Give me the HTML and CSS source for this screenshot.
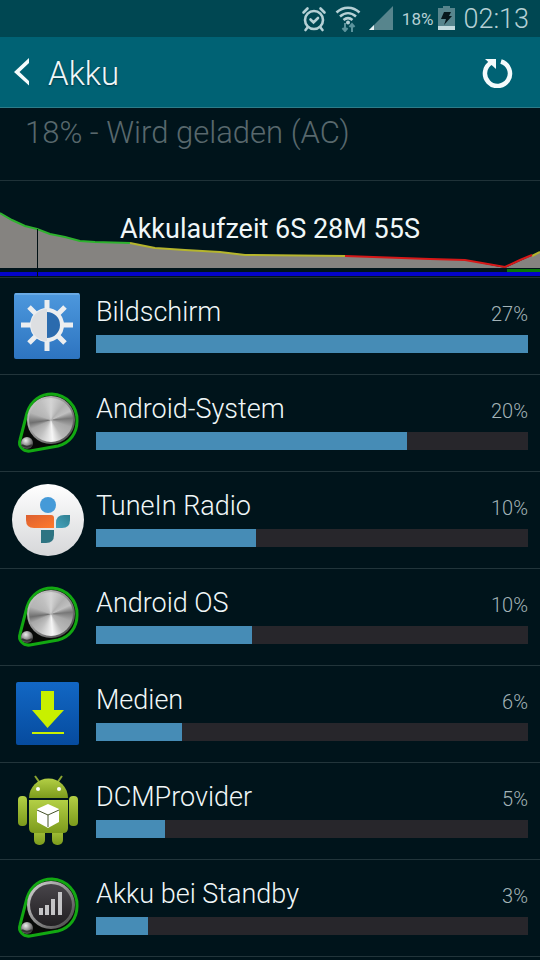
FILE: index.html
```html
<!DOCTYPE html>
<html lang="de">
<head>
  <meta charset="utf-8">
  <meta name="viewport" content="width=device-width,initial-scale=1.0">
  <title>Akku</title>
  <link rel="stylesheet" href="styles.css">
</head>
<body>

  <!-- shared gradients and the system knob -->
  <svg class="defs" aria-hidden="true">
    <defs>
      <linearGradient id="blue" x1="0" y1="0" x2="0" y2="1">
        <stop offset="0" stop-color="#4d98dd"/><stop offset="1" stop-color="#2d74c0"/>
      </linearGradient>
      <linearGradient id="deep-blue" x1="0" y1="0" x2="0" y2="1">
        <stop offset="0" stop-color="#1267c4"/><stop offset="1" stop-color="#064b9e"/>
      </linearGradient>
      <linearGradient id="white" x1="0" y1="0" x2="0" y2="1">
        <stop offset="0" stop-color="#ffffff"/><stop offset="1" stop-color="#d6d7d9"/>
      </linearGradient>
      <linearGradient id="orange" x1="0" y1="0" x2="1" y2="1">
        <stop offset="0" stop-color="#dc6030"/><stop offset="1" stop-color="#ff7a2c"/>
      </linearGradient>
      <linearGradient id="teal" x1="1" y1="0" x2="0" y2="1">
        <stop offset="0" stop-color="#2f7f90"/><stop offset="1" stop-color="#46a3bd"/>
      </linearGradient>
      <linearGradient id="droid" x1="0" y1="0" x2="0" y2="1">
        <stop offset="0" stop-color="#b3cf45"/><stop offset="1" stop-color="#7c9b1c"/>
      </linearGradient>
      <linearGradient id="rim" x1="0" y1="0" x2="1" y2="1">
        <stop offset="0" stop-color="#d8d8d8"/><stop offset=".5" stop-color="#8f8f8f"/><stop offset="1" stop-color="#3c3c3c"/>
      </linearGradient>
      <linearGradient id="face" x1="0" y1="0" x2="0" y2="1">
        <stop offset="0" stop-color="#48454a"/><stop offset="1" stop-color="#211f22"/>
      </linearGradient>
      <radialGradient id="ball" cx=".4" cy=".3" r=".7">
        <stop offset="0" stop-color="#eeeeee"/><stop offset=".5" stop-color="#999999"/><stop offset="1" stop-color="#444444"/>
      </radialGradient>
    </defs>
    <symbol id="knob-base" viewBox="0 0 72 72">
      <path d="M15 26C19 13 29 7 40 7a26 26 0 0 1 25 27c0 12-7 22-19 25L18 64C11 65 6 59 8 53Z" fill="#070907" stroke="#12a812" stroke-width="3"/>
      <circle cx="15" cy="56" r="6" fill="url(#ball)"/>
      <path d="M10 58c3 2 7 2 10 0" fill="none" stroke="#333" stroke-width="2"/>
      <circle cx="39" cy="33" r="24" fill="url(#rim)"/>
    </symbol>
  </svg>

  <div class="status-bar">
    <svg class="status-icon" width="26" height="26" viewBox="0 0 26 26" role="img" aria-label="Wecker">
      <g fill="none" stroke="#b5d0d5" stroke-width="2.6" stroke-linecap="round">
        <circle cx="13" cy="14" r="9"/>
        <path d="M9.500 13.500l3 3 4.500-4.500M2.500 6.500l4-4M23.500 6.500l-4-4M6.500 21.500L4.500 24M19.500 21.500l2 2.500"/>
      </g>
    </svg>
    <svg class="status-icon" width="26" height="26" viewBox="0 0 26 26" role="img" aria-label="WLAN">
      <g fill="none" stroke="#b5d0d5" stroke-width="2.500">
        <path d="M1.500 6.500C8 0 18 0 24.500 6.500M5 10.500c5-4.500 11-4.500 16 0M8.500 14c3-2.500 6-2.500 9 0"/>
      </g>
      <circle cx="13" cy="16.500" r="2" fill="#b5d0d5"/>
      <path d="M10 17v8M7.500 22l2.500 3 2.500-3M17 26v-8M14.500 21l2.500-3 2.500 3" fill="none" stroke="#5b939c" stroke-width="2"/>
    </svg>
    <svg class="status-icon" width="24" height="26" viewBox="0 0 24 26" role="img" aria-label="Signal">
      <path d="M24 0v24H0Z" fill="#57858d"/>
      <path d="M0 24h5v-5Z" fill="#e6f2f4"/>
    </svg>
    <span class="status-percent">18%</span>
    <svg class="status-icon" width="17" height="26" viewBox="0 0 17 26" role="img" aria-label="Akku wird geladen">
      <path d="M5 0h7v2h5v19H0V2h5Z" fill="#57858d"/>
      <path d="M0 20h17v4H0Z" fill="#c3dade"/>
      <path d="M6 6h7l-2 4h3L6 19l2-6H3Z" fill="#06171c"/>
    </svg>
    <time class="clock">02:13</time>
  </div>

  <header class="action-bar">
    <button class="back" type="button" aria-label="Zurück">
      <svg width="16" height="28" viewBox="0 0 16 28"><path d="M15 0v5L5.500 14 15 23v4.500L0 14Z" fill="#f4fbfc"/></svg>
    </button>
    <h1>Akku</h1>
    <button class="refresh" type="button" aria-label="Aktualisieren">
      <svg width="32" height="32" viewBox="0 0 32 32">
        <path d="M19 5.500a12.500 12.500 0 1 1-9.500 1" fill="none" stroke="#f4fbfc" stroke-width="4.500"/>
        <path d="M3 3h11v10Z" fill="#f4fbfc"/>
      </svg>
    </button>
  </header>

  <main>
    <p class="summary">18% - Wird geladen (AC)</p>

    <section class="history">
      <svg class="graph" viewBox="0 0 540 96" preserveAspectRatio="none" aria-hidden="true">
        <path d="M0 32L12 39 25 45 37 48 50 53 65 56 80 60 95 61 130 62 155 67 185 69 220 71 245 74 345 75 430 78 465 79 505 87 520 80 540 71V87H0Z" fill="#858380"/>
        <g fill="none" stroke-width="2">
          <path d="M0 32L12 39 25 45 37 48 50 53 65 56 80 60 95 61 130 62" stroke="#2eb22e"/>
          <path d="M130 62L155 67 185 69 220 71 245 74 345 75M532 75l8-4" stroke="#b5b52c"/>
          <path d="M345 75L430 78 465 79 505 86 520 79 532 74" stroke="#d61818"/>
        </g>
        <path d="M507 88h33v3h-33Z" fill="#087808"/>
        <path d="M0 91h540v4H0Z" fill="#0404c8"/>
        <path d="M37 48h1v48h-1Z" fill="#001014"/>
      </svg>
      <h2>Akkulaufzeit 6S 28M 55S</h2>
    </section>

    <ul class="usage">
      <li>
        <a href="#bildschirm">
          <svg class="icon" viewBox="0 0 72 72" aria-hidden="true">
            <rect x="2" y="3" width="66" height="66" rx="2" fill="url(#blue)"/>
            <path d="M3 4h64" stroke="#86bdec" stroke-width="1"/>
            <g stroke="#eceef0" stroke-width="5">
              <path d="M35 10v10M35 51v10M9 35h11M50 35h11M17 17l7 7M46 46l7 7M53 17l-7 7M24 46l-7 7"/>
            </g>
            <circle cx="35" cy="35" r="15" fill="#2b6bae" stroke="#eceef0" stroke-width="4"/>
            <path d="M35 19a16 16 0 0 0 0 32Z" fill="#dddfe2"/>
          </svg>
          <div class="info">
            <span class="name">Bildschirm</span><span class="percent">27%</span>
            <div class="bar"><div class="fill" style="width: 100%"></div></div>
          </div>
        </a>
      </li>
      <li>
        <a href="#android-system">
          <div class="icon knob">
            <svg viewBox="0 0 72 72" aria-hidden="true"><use href="#knob-base"/></svg>
            <div class="steel"></div>
          </div>
          <div class="info">
            <span class="name">Android-System</span><span class="percent">20%</span>
            <div class="bar"><div class="fill" style="width: 72%"></div></div>
          </div>
        </a>
      </li>
      <li>
        <a href="#tunein">
          <svg class="icon" viewBox="0 0 72 72" aria-hidden="true">
            <circle cx="36" cy="36" r="36" fill="url(#white)"/>
            <circle cx="36" cy="21" r="8" fill="#459ad8"/>
            <path d="M14 31h25q3 0 3 3v10H22q-8 0-8-8Z" fill="url(#orange)"/>
            <path d="M58 31v5q0 8-8 8h-6v-5q0-8 8-8Z" fill="url(#teal)"/>
            <path d="M29 46h13v5q0 8-8 8h-5Z" fill="#2e7482"/>
          </svg>
          <div class="info">
            <span class="name">TuneIn Radio</span><span class="percent">10%</span>
            <div class="bar"><div class="fill" style="width: 37%"></div></div>
          </div>
        </a>
      </li>
      <li>
        <a href="#android-os">
          <div class="icon knob">
            <svg viewBox="0 0 72 72" aria-hidden="true"><use href="#knob-base"/></svg>
            <div class="steel"></div>
          </div>
          <div class="info">
            <span class="name">Android OS</span><span class="percent">10%</span>
            <div class="bar"><div class="fill" style="width: 36%"></div></div>
          </div>
        </a>
      </li>
      <li>
        <a href="#medien">
          <svg class="icon" viewBox="0 0 72 72" aria-hidden="true">
            <rect x="4" y="4" width="63" height="63" rx="2" fill="url(#deep-blue)"/>
            <path d="M29 13h13v19h10L35.500 50 20 32h9ZM20 54h32v2H20Z" fill="#c8f000"/>
          </svg>
          <div class="info">
            <span class="name">Medien</span><span class="percent">6%</span>
            <div class="bar"><div class="fill" style="width: 20%"></div></div>
          </div>
        </a>
      </li>
      <li>
        <a href="#dcmprovider">
          <svg class="icon" viewBox="0 0 72 72" aria-hidden="true">
            <path d="M23 1l5 7M50 1l-5 7" stroke="#8aa532" stroke-width="2"/>
            <g fill="url(#droid)">
              <path d="M17 23a19 19 0 0 1 39 0Z"/>
              <rect x="6" y="21" width="9" height="30" rx="4"/>
              <rect x="57" y="21" width="9" height="30" rx="4"/>
              <rect x="22" y="50" width="11" height="20" rx="5"/>
              <rect x="40" y="50" width="11" height="20" rx="5"/>
              <path d="M17 25h39v28q0 5-5 5H22q-5 0-5-5Z"/>
            </g>
            <circle cx="26" cy="14" r="2" fill="#fff"/>
            <circle cx="47" cy="14" r="2" fill="#fff"/>
            <path d="M36 29l11 5v13l-11 6-11-6V34Z" fill="#fff"/>
            <path d="M25 35l11 5 11-5M36 40v12" fill="none" stroke="#47542a" stroke-width="1"/>
          </svg>
          <div class="info">
            <span class="name">DCMProvider</span><span class="percent">5%</span>
            <div class="bar"><div class="fill" style="width: 16%"></div></div>
          </div>
        </a>
      </li>
      <li>
        <a href="#standby">
          <svg class="icon" viewBox="0 0 72 72" aria-hidden="true">
            <use href="#knob-base"/>
            <circle cx="39" cy="33" r="21" fill="url(#face)"/>
            <path d="M27 36h4v7h-4ZM33 33h4v10h-4ZM39 27h4v16h-4ZM46 20h4v23h-4Z" fill="#c4c4c6"/>
          </svg>
          <div class="info">
            <span class="name">Akku bei Standby</span><span class="percent">3%</span>
            <div class="bar"><div class="fill" style="width: 12%"></div></div>
          </div>
        </a>
      </li>
    </ul>
  </main>

</body>
</html>
```
FILE: styles.css
```css
* { box-sizing: border-box; }
body { margin: 0; background: #00141b; color: #f0f7f8; font-family: Roboto, "Liberation Sans", sans-serif; font-weight: 300; }
h1, h2, p, ul { margin: 0; padding: 0; font-weight: 300; }
svg { display: block; }
button { background: none; border: none; padding: 0; cursor: pointer; }
.defs { position: absolute; width: 0; height: 0; }

.status-bar { display: flex; align-items: center; justify-content: flex-end; height: 37px; padding: 0 11px; background: #004752; color: #b5d0d5; }
.status-icon { margin-right: 8px; }
.status-percent { margin: 0 5px 0 1px; font-size: 17px; font-weight: 400; }
.clock { font-size: 27px; }

.action-bar { display: flex; align-items: center; height: 71px; padding: 0 26px 0 14px; background: #006274; border-bottom: 1px solid #2d7c89; }
.action-bar h1 { flex: 1; margin-left: 18px; padding-top: 4px; font-size: 33px; line-height: 36px; text-shadow: 0 1px 2px #00323c; }

.summary { height: 73px; padding: 7px 25px; border-bottom: 1px solid #1f3238; color: #58686d; font-size: 31px; line-height: 36px; }

.history { display: grid; height: 97px; border-bottom: 1px solid #1f3238; }
.history > * { grid-area: 1 / 1; }
.graph { width: 100%; height: 96px; }
.history h2 { align-self: center; text-align: center; font-size: 27px; font-weight: 400; line-height: 32px; }

.usage { list-style: none; }
.usage li { border-bottom: 1px solid #22353b; }
.usage a { display: flex; gap: 12px; height: 96px; padding: 12px; color: inherit; text-decoration: none; }
.icon { flex: none; width: 72px; height: 72px; }
.knob { display: grid; }
.knob > * { grid-area: 1 / 1; }
.steel { width: 44px; height: 44px; margin: 11px 0 0 17px; border-radius: 50%; background: conic-gradient(#d4d4d4, #b0b0b0 40deg, #c0c0c0 65deg, #777 85deg, #a8a8a8 110deg, #b8b8b8 145deg, #f6f6f6 175deg, #c0c0c0 215deg, #a8a8a8 245deg, #6f6f6f 262deg, #b4b4b4 290deg, #c0c0c0 330deg, #d4d4d4); }
.info { flex: 1; display: grid; grid-template-columns: 1fr auto; grid-template-rows: 45px 18px; align-items: center; }
.name { font-size: 27px; line-height: 45px; }
.percent { padding-top: 2px; color: #a3b3b7; font-size: 20px; }
.bar { grid-column: 1 / 3; height: 18px; background: #27262b; }
.fill { height: 18px; background: #468cb6; }
```
